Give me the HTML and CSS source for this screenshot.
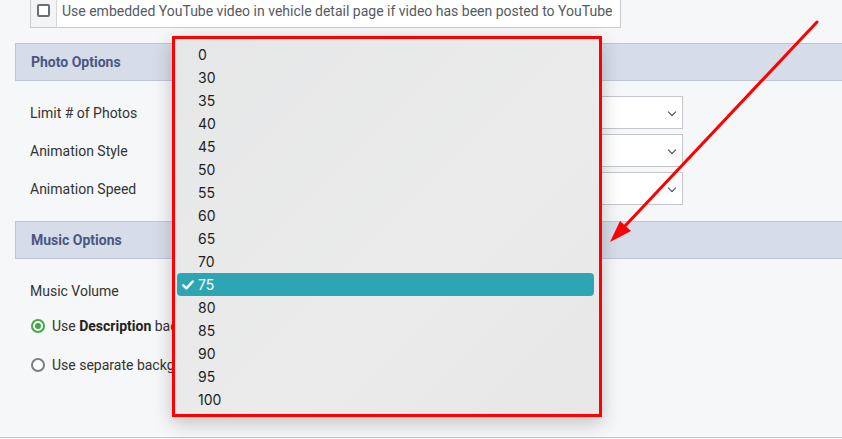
FILE: index.html
```html
<!DOCTYPE html>
<html lang="en">
<head>
  <meta charset="UTF-8" />
  <meta name="viewport" content="width=device-width, initial-scale=1.0"/>
  <title>Vehicle Options</title>
  <link rel="stylesheet" href="styles.css">
</head>
<body>
  <div class="content">
    <div class="yt-row">
      <span class="cb-cell"><span class="cb"></span></span>
      <span class="yt-text">Use embedded YouTube video in vehicle detail page if video has been posted to YouTube</span>
    </div>

    <section class="group">
      <div class="group-head">Photo Options</div>
      <div class="fields">
        <div class="field">
          <label>Limit # of Photos</label>
          <div class="select"><span class="chev"></span></div>
        </div>
        <div class="field">
          <label>Animation Style</label>
          <div class="select"><span class="chev"></span></div>
        </div>
        <div class="field">
          <label>Animation Speed</label>
          <div class="select"><span class="chev"></span></div>
        </div>
      </div>
    </section>

    <section class="group">
      <div class="group-head">Music Options</div>
      <div class="fields music">
        <div class="field">
          <label>Music Volume</label>
          <div class="select short"><span class="chev"></span></div>
        </div>
        <div class="radio-row first">
          <span class="radio on"></span>
          <span class="radio-text">Use <b>Description</b> background music</span>
        </div>
        <div class="radio-row">
          <span class="radio"></span>
          <span class="radio-text">Use separate background music</span>
        </div>
      </div>
    </section>
  </div>

  <div class="menu">
    <div class="item">0</div>
    <div class="item">30</div>
    <div class="item">35</div>
    <div class="item">40</div>
    <div class="item">45</div>
    <div class="item">50</div>
    <div class="item">55</div>
    <div class="item">60</div>
    <div class="item">65</div>
    <div class="item">70</div>
    <div class="item selected">
      <svg class="tick" width="12" height="10" viewBox="0 0 12 10"><path d="M1.3 5.3 L4.4 8.4 L10.7 1.5" fill="none" stroke="#fff" stroke-width="2.4" stroke-linecap="round" stroke-linejoin="round"/></svg>
      75
    </div>
    <div class="item">80</div>
    <div class="item">85</div>
    <div class="item">90</div>
    <div class="item">95</div>
    <div class="item">100</div>
  </div>

  <!-- annotation arrow -->
  <svg class="arrow" width="842" height="439" viewBox="0 0 842 439">
    <line x1="817" y1="22" x2="625" y2="226" stroke="#ff0000" stroke-width="3" stroke-linecap="round"/>
    <polygon points="610,242 620,221 631,231" fill="#ff0000"/>
  </svg>
</body>
</html>
```

FILE: styles.css
```css
body {
  margin: 0;
  background: #f6f7f9;
  font-family: Roboto, "Liberation Sans", Arial, sans-serif;
  font-size: 14px;
  color: #333;
  width: 842px;
  height: 439px;
  overflow: hidden;
  position: relative;
}

.content {
  border-bottom: 1px solid #c6c9d0;
  height: 438px;
  box-sizing: border-box;
}

.yt-row {
  display: flex;
  margin-left: 30px;
  width: 591px;
  height: 28px;
  box-sizing: border-box;
  border: 1px solid #c9cbd0;
  border-top: none;
  background: #fff;
}

.cb-cell {
  width: 26px;
  background: #f3f4f6;
  border-right: 1px solid #d3d5da;
  display: flex;
  justify-content: center;
  padding-top: 4px;
  box-sizing: border-box;
}

.cb {
  width: 13px;
  height: 13px;
  box-sizing: border-box;
  border: 2px solid #6b6e76;
  border-radius: 2px;
  background: #fff;
}

.yt-text {
  padding-left: 5px;
  line-height: 22px;
  color: #555a62;
}

.group {
  margin-left: 15px;
}

.yt-row + .group {
  margin-top: 15px;
}

.group-head {
  height: 38px;
  box-sizing: border-box;
  border: 1px solid #bfc6d3;
  border-right: none;
  background: #d6dde9;
  color: #4b5684;
  font-weight: bold;
  font-size: 14px;
  display: flex;
  align-items: center;
  padding-left: 15px;
  padding-bottom: 1px;
}

.fields {
  padding: 15px 0 16px 15px;
}

.field {
  display: flex;
  align-items: center;
  height: 33px;
}

.field + .field {
  margin-top: 5px;
}

.field label {
  width: 170px;
}

.select {
  position: relative;
  width: 483px;
  height: 33px;
  box-sizing: border-box;
  border: 1px solid #c4c6cb;
  background: #fff;
}

.select.short {
  width: 200px;
}

.chev {
  position: absolute;
  right: 7px;
  top: 12px;
  width: 5px;
  height: 5px;
  border-right: 1.5px solid #444;
  border-bottom: 1.5px solid #444;
  transform: rotate(45deg);
}

/* the popup covers the rest of these rows */
.radio-row {
  display: flex;
  align-items: center;
  gap: 7px;
  width: 142px;
  height: 20px;
  margin-top: 19px;
  padding-left: 1px;
  overflow: hidden;
  white-space: nowrap;
}

.radio-row.first {
  margin-top: 9px;
}

.radio {
  flex: none;
  width: 14px;
  height: 14px;
  box-sizing: border-box;
  border: 2px solid #7b7d87;
  border-radius: 50%;
  background: #fff;
  display: flex;
  align-items: center;
  justify-content: center;
}

.radio.on {
  border-color: #41a844;
}

.radio.on::after {
  content: "";
  width: 6px;
  height: 6px;
  border-radius: 50%;
  background: #41a844;
}

.radio-text {
  overflow: hidden;
}

.radio-row b {
  color: #222;
}

.menu {
  position: absolute;
  left: 172px;
  top: 36px;
  width: 430px;
  height: 381px;
  box-sizing: border-box;
  border: 3px solid #ff0000;
  background: linear-gradient(135deg, #e6e7e8, #ebebeb 60%, #e7e7e7);
  box-shadow: 0 6px 18px rgba(0, 0, 0, 0.22);
  padding: 3.5px 5px 0 2px;
  font-family: Inter, "Noto Sans", sans-serif;
  font-size: 14px;
  color: #1e1e1e;
}

.item {
  position: relative;
  height: 23px;
  line-height: 23px;
  padding-left: 21px;
  border-radius: 4px;
}

.item.selected {
  background: #2ea5b3;
  color: #fff;
}

.tick {
  position: absolute;
  left: 5px;
  top: 7px;
}

.arrow {
  position: absolute;
  left: 0;
  top: 0;
  pointer-events: none;
}
```
